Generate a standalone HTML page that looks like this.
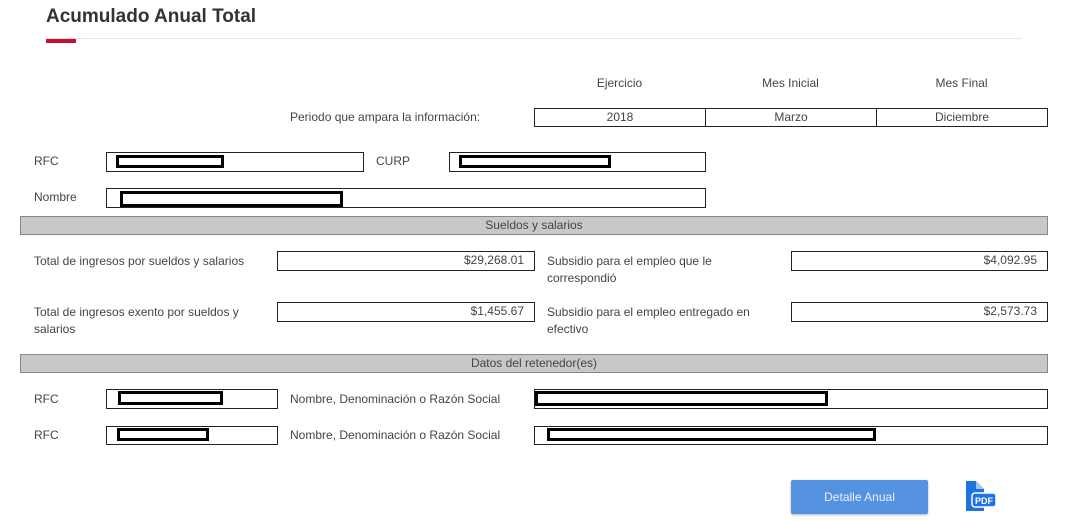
<!DOCTYPE html>
<html><head><meta charset="utf-8"><style>
body{margin:0;width:1068px;height:521px;background:#fff;position:relative;overflow:hidden;font-family:"Liberation Sans",Arial,sans-serif;font-size:12px;color:#444}
.a{position:absolute}
.t{position:absolute;white-space:nowrap;line-height:17px;margin-top:1px}
.box{position:absolute;border:1px solid #222;box-sizing:border-box;background:#fff;text-align:center;line-height:17px}
.r{position:absolute;border:3px solid #000;box-sizing:border-box;background:#fff}
.band{position:absolute;left:20px;width:1028px;height:19px;background:#c8c8c8;border:1px solid #888;box-sizing:border-box;text-align:center;line-height:17px}
.num{text-align:right;padding-right:10px}
</style></head><body>
<div class="t" style="left:46px;top:5px;font-size:19px;font-weight:bold;color:#333;line-height:22px">Acumulado Anual Total</div>
<div class="a" style="left:46px;top:38px;width:976px;height:1px;background:#e6e6e6"></div>
<div class="a" style="left:46px;top:39px;width:30px;height:4px;background:#c8102e"></div>

<div class="t" style="left:534px;width:171px;text-align:center;top:74px">Ejercicio</div>
<div class="t" style="left:705px;width:171px;text-align:center;top:74px">Mes Inicial</div>
<div class="t" style="left:876px;width:171px;text-align:center;top:74px">Mes Final</div>
<div class="t" style="left:290px;top:108px">Periodo que ampara la información:</div>
<div class="box" style="left:534px;top:108px;width:172px;height:19px">2018</div>
<div class="box" style="left:705px;top:108px;width:172px;height:19px">Marzo</div>
<div class="box" style="left:876px;top:108px;width:172px;height:19px">Diciembre</div>

<div class="t" style="left:34px;top:152px">RFC</div>
<div class="box" style="left:106px;top:152px;width:258px;height:20px"></div>
<div class="r" style="left:116px;top:155px;width:108px;height:13px"></div>
<div class="t" style="left:376px;top:152px">CURP</div>
<div class="box" style="left:449px;top:152px;width:257px;height:20px"></div>
<div class="r" style="left:459px;top:155px;width:152px;height:13px"></div>
<div class="t" style="left:34px;top:188px">Nombre</div>
<div class="box" style="left:106px;top:188px;width:600px;height:20px"></div>
<div class="r" style="left:120px;top:191px;width:223px;height:16px"></div>

<div class="band" style="top:216px">Sueldos y salarios</div>
<div class="t" style="left:34px;top:252px">Total de ingresos por sueldos y salarios</div>
<div class="box num" style="left:277px;top:251px;width:258px;height:20px">$29,268.01</div>
<div class="t" style="left:547px;top:252px">Subsidio para el empleo que le<br>correspondió</div>
<div class="box num" style="left:791px;top:251px;width:257px;height:20px">$4,092.95</div>
<div class="t" style="left:34px;top:303px">Total de ingresos exento por sueldos y<br>salarios</div>
<div class="box num" style="left:277px;top:302px;width:258px;height:20px">$1,455.67</div>
<div class="t" style="left:547px;top:303px">Subsidio para el empleo entregado en<br>efectivo</div>
<div class="box num" style="left:791px;top:302px;width:257px;height:20px">$2,573.73</div>

<div class="band" style="top:354px">Datos del retenedor(es)</div>
<div class="t" style="left:34px;top:390px">RFC</div>
<div class="box" style="left:106px;top:389px;width:172px;height:20px"></div>
<div class="r" style="left:118px;top:391px;width:105px;height:14px"></div>
<div class="t" style="left:290px;top:390px">Nombre, Denominación o Razón Social</div>
<div class="box" style="left:534px;top:389px;width:514px;height:20px"></div>
<div class="r" style="left:535px;top:391px;width:293px;height:15px"></div>
<div class="t" style="left:34px;top:426px">RFC</div>
<div class="box" style="left:106px;top:426px;width:172px;height:19px"></div>
<div class="r" style="left:117px;top:428px;width:92px;height:13px"></div>
<div class="t" style="left:290px;top:426px">Nombre, Denominación o Razón Social</div>
<div class="box" style="left:534px;top:426px;width:514px;height:19px"></div>
<div class="r" style="left:547px;top:428px;width:329px;height:13px"></div>

<div class="a" style="left:791px;top:480px;width:137px;height:34px;background:#5592e0;border-radius:2px;box-shadow:0 1px 2px rgba(0,0,0,.3);color:#eef;text-align:center;line-height:34px;font-size:12px">Detalle Anual</div>
<svg class="a" style="left:963px;top:479px" width="36" height="34" viewBox="0 0 36 34">
<path d="M3 2h10l8 8v22H3z" fill="#1e73e0"/>
<path d="M13 2v8h8" fill="#9cc3f3"/>
<rect x="9" y="14" width="24" height="14" rx="3" fill="#1e73e0" stroke="#fff" stroke-width="1.5"/>
<text x="21" y="25" font-family="Liberation Sans" font-size="9" font-weight="bold" fill="#fff" text-anchor="middle">PDF</text>
</svg>
</body></html>
